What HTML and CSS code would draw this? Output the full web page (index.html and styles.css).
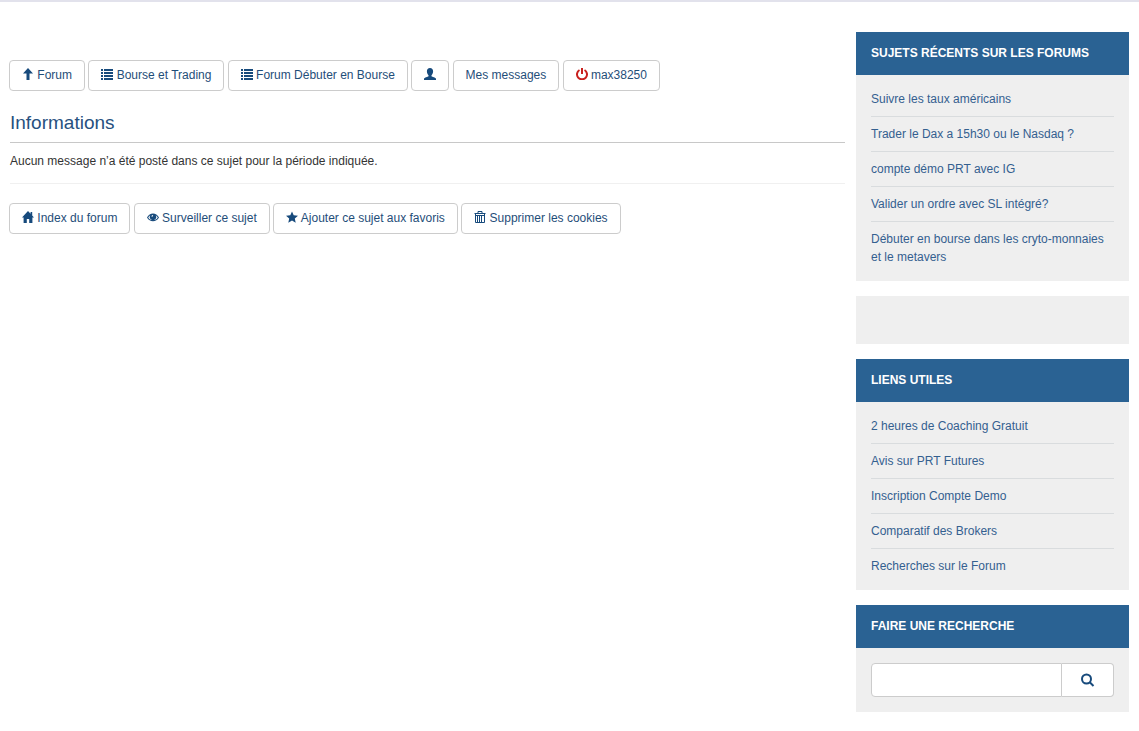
FILE: index.html
```
<!DOCTYPE html>
<html lang="fr">
<head>
    <meta charset="UTF-8">
    <meta name="viewport" content="width=device-width, initial-scale=1.0">
    <title>Informations</title>
    <link rel="stylesheet" href="styles.css">
</head>
<body>
    <svg class="sprite" aria-hidden="true">
        <symbol id="i-list" viewBox="0 0 12 12">
            <path d="M0 1h2v2H0zM3 1h9v2H3zM0 4h2v2H0zM3 4h9v2H3zM0 7h2v2H0zM3 7h9v2H3zM0 10h2v2H0zM3 10h9v2H3z"/>
        </symbol>
    </svg>

    <div class="page">
        <main class="content">
            <nav class="toolbar">
                <a class="btn" href="#"><svg class="icon" viewBox="0 0 12 12"><path d="M6 0l5 5.500H7.500V12h-3V5.500H1z"/></svg> Forum</a>
                <a class="btn" href="#"><svg class="icon"><use href="#i-list"/></svg> Bourse et Trading</a>
                <a class="btn" href="#"><svg class="icon"><use href="#i-list"/></svg> Forum Débuter en Bourse</a>
                <a class="btn" href="#" aria-label="Profil"><svg class="icon" viewBox="0 0 12 12"><path d="M6 0C4 0 2.900 1.300 2.900 3.300c0 1.700.7 3.100 1.600 3.900v1C3.800 9 .4 9.300 0 10.800V12h12v-1.200C11.600 9.300 8.200 9 7.500 8.200v-1c.9-.8 1.600-2.200 1.600-3.900C9.100 1.300 8 0 6 0z"/></svg></a>
                <a class="btn" href="#">Mes messages</a>
                <a class="btn" href="#"><svg class="icon icon-power" viewBox="0 0 12 12"><path d="M3.500 2a5 5 0 1 0 5 0M6 0v6"/></svg> max38250</a>
            </nav>

            <section class="topic">
                <h1>Informations</h1>
                <p>Aucun message n’a été posté dans ce sujet pour la période indiquée.</p>
            </section>

            <nav class="toolbar">
                <a class="btn" href="#"><svg class="icon" viewBox="0 0 12 12"><path d="M6 0L0 6.500h1.600V12h3.200V8h2.400v4h3.200V6.500H12l-1.800-2V1H8.600v1.800z"/></svg> Index du forum</a>
                <a class="btn" href="#"><svg class="icon" viewBox="0 0 12 12"><path fill-rule="evenodd" d="M0 6.500C1.500 4 3.600 2.600 6 2.600S10.500 4 12 6.500C10.500 9 8.400 10.200 6 10.200S1.500 9 0 6.500zM1.200 6.500C2.300 8.300 4 9.300 6 9.300s3.700-1 4.800-2.800C10.200 5.500 9.500 4.700 8.700 4.200a3.200 3.200 0 1 1-5.400 0C2.500 4.700 1.800 5.500 1.200 6.500zM5.900 4a1.500 1.500 0 0 0-1.500 1.500l1 .3A1 1 0 0 1 6.200 5z"/></svg> Surveiller ce sujet</a>
                <a class="btn" href="#"><svg class="icon" viewBox="0 0 12 12"><path d="M6 .5l1.700 3.700 4.300.5-3.200 2.800.9 4.200L6 9.600l-3.700 2.100.9-4.200L0 4.700l4.300-.5z"/></svg> Ajouter ce sujet aux favoris</a>
                <a class="btn" href="#"><svg class="icon icon-trash" viewBox="0 0 12 12"><path d="M.5 2.500h11M4 2V.5h4V2M2 4.500h8M1.500 3v8.500h9V3M3.500 5v6M5.500 5v6M7.500 5v6"/></svg> Supprimer les cookies</a>
            </nav>
        </main>

        <aside class="sidebar">
            <section class="panel">
                <h2>Sujets récents sur les forums</h2>
                <ul>
                    <li><a href="#">Suivre les taux américains</a></li>
                    <li><a href="#">Trader le Dax a 15h30 ou le Nasdaq ?</a></li>
                    <li><a href="#">compte démo PRT avec IG</a></li>
                    <li><a href="#">Valider un ordre avec SL intégré?</a></li>
                    <li><a href="#">Débuter en bourse dans les cryto-monnaies et le metavers</a></li>
                </ul>
            </section>

            <div class="panel panel-empty"></div>

            <section class="panel">
                <h2>Liens utiles</h2>
                <ul>
                    <li><a href="#">2 heures de Coaching Gratuit</a></li>
                    <li><a href="#">Avis sur PRT Futures</a></li>
                    <li><a href="#">Inscription Compte Demo</a></li>
                    <li><a href="#">Comparatif des Brokers</a></li>
                    <li><a href="#">Recherches sur le Forum</a></li>
                </ul>
            </section>

            <section class="panel">
                <h2>Faire une recherche</h2>
                <form class="search">
                    <input type="text" name="q" aria-label="Faire une recherche">
                    <button type="submit" aria-label="Rechercher"><svg class="icon-search" viewBox="0 0 14 14"><circle cx="5.500" cy="6" r="4.500"/><path d="M8.500 9l4 4"/></svg></button>
                </form>
            </section>
        </aside>
    </div>
</body>
</html>
```
FILE: styles.css
```
* {
    box-sizing: border-box;
}

body {
    margin: 0;
    border-top: 2px solid #e2e2ec;
    background: #fff;
    color: #333;
    font-family: "Liberation Sans", Arial, sans-serif;
    font-size: 12px;
    line-height: 18px;
}

h1, h2, p, ul {
    margin: 0;
    padding: 0;
}

a {
    text-decoration: none;
}

.sprite {
    display: none;
}

.page {
    display: flex;
    gap: 11px;
    padding: 30px 10px 18px 9px;
}

.content {
    flex: 1;
    min-width: 0;
    padding-top: 28px;
}

.sidebar {
    flex: 0 0 273px;
}

/* Buttons */
.btn {
    display: inline-block;
    padding: 6px 12px;
    border: 1px solid #ccc;
    border-radius: 4px;
    background: #fff;
    color: #1f4e79;
    line-height: 17px;
    white-space: nowrap;
    vertical-align: middle;
}

.btn:hover {
    background: #e6e6e6;
}

.icon {
    width: 12px;
    height: 12px;
    fill: #174a7c;
    vertical-align: -1px;
}

.icon-power {
    fill: none;
    stroke: #c9211e;
    stroke-width: 2;
}

.icon-trash {
    fill: none;
    stroke: #174a7c;
}

/* Topic */
.topic {
    margin: 21px 0 19px;
    padding-left: 1px;
}

.topic h1 {
    padding: 1px 0 9px;
    border-bottom: 1px solid #c8c8c8;
    color: #27517f;
    font-size: 19px;
    font-weight: normal;
    line-height: 20px;
}

.topic p {
    padding: 9px 0 13px;
    border-bottom: 1px solid #f0f0f0;
}

/* Sidebar */
.panel {
    margin-bottom: 15px;
    background: #efefef;
}

.panel-empty {
    height: 48px;
}

.panel h2 {
    padding: 13px 15px;
    background: #2a6293;
    color: #fff;
    font-size: 12px;
    font-weight: bold;
    line-height: 17px;
    text-transform: uppercase;
}

.panel ul {
    padding: 15px;
    list-style: none;
}

.panel li + li {
    margin-top: 8px;
    padding-top: 8px;
    border-top: 1px solid #d9dcde;
}

.panel a {
    color: #34608f;
}

.search {
    display: flex;
    padding: 15px;
}

.search input {
    flex: 1;
    min-width: 0;
    height: 34px;
    padding: 6px 12px;
    border: 1px solid #ccc;
    border-radius: 4px 0 0 4px;
    background: #fff;
    font: inherit;
}

.search button {
    display: flex;
    align-items: center;
    justify-content: center;
    width: 52px;
    border: 1px solid #ccc;
    border-left: 0;
    border-radius: 0 4px 4px 0;
    background: #fff;
    cursor: pointer;
}

.icon-search {
    width: 14px;
    height: 14px;
    fill: none;
    stroke: #174a7c;
    stroke-width: 2;
}

@media (max-width: 800px) {
    .page {
        flex-direction: column;
    }

    .sidebar {
        flex: none;
    }
}
```
